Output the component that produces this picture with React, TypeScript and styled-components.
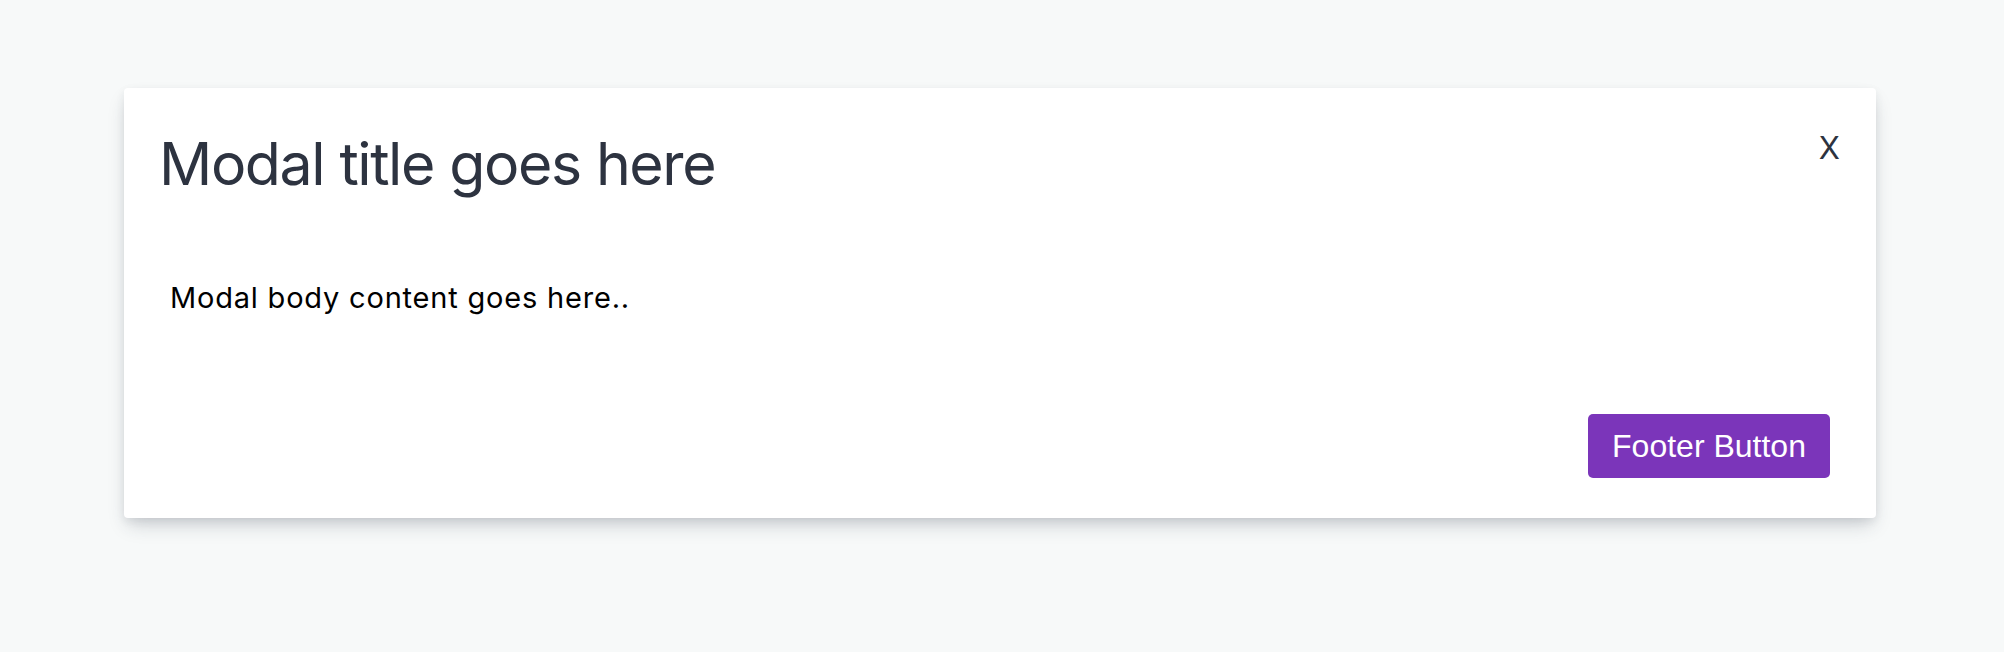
import React from "react";
import styled, { createGlobalStyle } from "styled-components";

const GlobalStyle = createGlobalStyle`
  html, body {
    margin: 0;
    padding: 0;
    background: #f7f9f9;
  }
  body {
    font-family: Inter, "Noto Sans", sans-serif;
  }
`;

const Page = styled.div`
  height: 652px;
  padding: 88px 128px 0 124px;
  box-sizing: border-box;
`;

const ModalCard = styled.div`
  position: relative;
  background: #ffffff;
  border-radius: 4px;
  box-shadow: 0 10px 18px -4px rgba(40, 50, 70, 0.22),
    0 3px 8px rgba(40, 50, 70, 0.08);
  height: 430px;
  box-sizing: border-box;
  display: flex;
  flex-direction: column;
`;

const Header = styled.header`
  display: flex;
  justify-content: space-between;
  align-items: flex-start;
  padding: 40px 36px 0 35px;
`;

const Title = styled.h1`
  margin: 0;
  font-family: Inter, "Noto Sans", sans-serif;
  font-weight: 400;
  font-size: 59px;
  line-height: 72px;
  color: #2d3340;
  letter-spacing: -1.4px;
`;

const CloseButton = styled.button`
  border: none;
  background: transparent;
  padding: 0;
  font-family: Inter, "Noto Sans", sans-serif;
  font-size: 31px;
  line-height: 40px;
  color: #2d3340;
  cursor: pointer;
`;

const Body = styled.div`
  flex: 1;
  padding: 80px 0 0 46px;
  font-family: Inter, "Noto Sans", sans-serif;
  font-size: 29px;
  line-height: 36px;
  letter-spacing: 0.8px;
  color: #000000;
`;

const Footer = styled.footer`
  display: flex;
  justify-content: flex-end;
  padding: 0 46px 40px 0;
`;

const FooterButton = styled.button`
  width: 242px;
  height: 64px;
  border: none;
  border-radius: 5px;
  background: #7b35ba;
  color: #ffffff;
  font-family: "Liberation Sans", Arial, sans-serif;
  font-size: 32px;
  cursor: pointer;
`;

export default function App() {
  return (
    <>
      <GlobalStyle />
      <Page>
        <ModalCard>
          <Header>
            <Title>Modal title goes here</Title>
            <CloseButton>X</CloseButton>
          </Header>
          <Body>Modal body content goes here..</Body>
          <Footer>
            <FooterButton>Footer Button</FooterButton>
          </Footer>
        </ModalCard>
      </Page>
    </>
  );
}
